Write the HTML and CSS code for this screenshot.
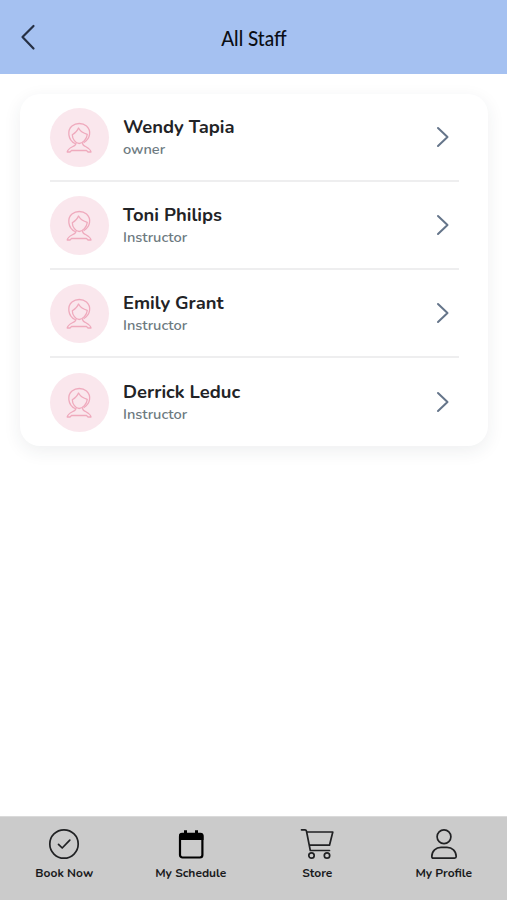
FILE: index.html
```html
<!DOCTYPE html>
<html lang="en">
<head>
    <meta charset="UTF-8">
    <meta name="viewport" content="width=device-width, initial-scale=1.0">
    <title>All Staff</title>
    <link rel="stylesheet" href="styles.css">
</head>
<body>
    <!-- Shared avatar drawing -->
    <svg class="sprite" width="0" height="0">
        <symbol id="avatar" viewBox="0 0 28 31">
            <path d="M9 21.500C1.500 18 1.200 8 6 4C10.200 0.600 16.500 0.700 20.500 4C25.500 8.500 24.500 16.500 18 20.500"/>
            <path d="M12.500 6C11.500 9 9 11 6.300 12.800C6.300 17 9.500 21.500 13.200 21.500C16.500 21.500 21 17 21.300 12.300C18 11.500 14.500 9.500 12.500 6Z"/>
            <path d="M10 21.200C10 25 2.500 24.500 1.200 30H4L5.500 28.500H20.500L22 30H25C23.700 24.500 16.500 25 16.500 21.200"/>
        </symbol>
    </svg>

    <header class="header">
        <button class="back-button" aria-label="Back">
            <svg width="16" height="28" viewBox="0 0 16 28"><path d="M13.500 3L2.500 14L13.500 25.500"/></svg>
        </button>
        <h1>All Staff</h1>
    </header>

    <main class="content">
        <ul class="staff-list">
            <li class="staff-row">
                <div class="avatar"><svg width="28" height="31"><use href="#avatar"/></svg></div>
                <div class="staff-info">
                    <h2>Wendy Tapia</h2>
                    <p>owner</p>
                </div>
                <svg class="chevron" width="14" height="22" viewBox="0 0 14 22"><path d="M2 2L11.500 11L2 20"/></svg>
            </li>
            <li class="staff-row">
                <div class="avatar"><svg width="28" height="31"><use href="#avatar"/></svg></div>
                <div class="staff-info">
                    <h2>Toni Philips</h2>
                    <p>Instructor</p>
                </div>
                <svg class="chevron" width="14" height="22" viewBox="0 0 14 22"><path d="M2 2L11.500 11L2 20"/></svg>
            </li>
            <li class="staff-row">
                <div class="avatar"><svg width="28" height="31"><use href="#avatar"/></svg></div>
                <div class="staff-info">
                    <h2>Emily Grant</h2>
                    <p>Instructor</p>
                </div>
                <svg class="chevron" width="14" height="22" viewBox="0 0 14 22"><path d="M2 2L11.500 11L2 20"/></svg>
            </li>
            <li class="staff-row">
                <div class="avatar"><svg width="28" height="31"><use href="#avatar"/></svg></div>
                <div class="staff-info">
                    <h2>Derrick Leduc</h2>
                    <p>Instructor</p>
                </div>
                <svg class="chevron" width="14" height="22" viewBox="0 0 14 22"><path d="M2 2L11.500 11L2 20"/></svg>
            </li>
        </ul>
    </main>

    <nav class="tab-bar">
        <a class="tab">
            <svg width="34" height="32" viewBox="0 0 34 32">
                <circle cx="17" cy="16" r="14.200"/>
                <path d="M11.500 16.300L15.200 20L22.800 12.200"/>
            </svg>
            <span>Book Now</span>
        </a>
        <a class="tab">
            <svg width="34" height="32" viewBox="0 0 34 32">
                <rect class="calendar" x="6" y="6" width="22.400" height="23.500" rx="2.500"/>
                <path class="solid" d="M5 10.500V7.500Q5 4.800 8 4.800H10V2.300H13V4.800H21V2.300H24V4.800H26.500Q29.500 4.800 29.500 7.500V12H5Z"/>
            </svg>
            <span>My Schedule</span>
        </a>
        <a class="tab">
            <svg width="34" height="32" viewBox="0 0 34 32">
                <path d="M1.500 1.800H5Q6.200 1.800 6.500 3.200L10.300 22.500H29.500M6.800 4H32.800L29.500 17.200H9.300"/>
                <circle cx="11.500" cy="27.500" r="2.700"/>
                <circle cx="27" cy="27.500" r="2.700"/>
            </svg>
            <span>Store</span>
        </a>
        <a class="tab">
            <svg width="34" height="32" viewBox="0 0 34 32">
                <circle cx="17" cy="8.800" r="6.900"/>
                <path d="M4.800 28.600C4.800 22.800 9 19.400 14 19.400H20C25 19.400 29.200 22.800 29.200 28.600Q29.200 30.200 27.600 30.200H6.400Q4.800 30.200 4.800 28.600Z"/>
            </svg>
            <span>My Profile</span>
        </a>
    </nav>
</body>
</html>
```
FILE: styles.css
```css
/* Common styles */
* {
    box-sizing: border-box;
}

body {
    font-family: Nunito, "Open Sans", sans-serif;
    background-color: #ffffff;
    margin: 0;
    display: flex;
    flex-direction: column;
    height: 100vh;
}

h1, h2, p, ul {
    margin: 0;
    padding: 0;
}

svg {
    display: block;
    fill: none;
    stroke-linecap: round;
    stroke-linejoin: round;
}

.sprite {
    position: absolute;
}

/* Header */
.header {
    display: grid;
    grid-template-columns: 60px 1fr 60px;
    align-items: center;
    height: 74px;
    flex-shrink: 0;
    background-color: #a5c1f1;
}

.back-button {
    background: none;
    border: none;
    padding: 0 0 0 20px;
    cursor: pointer;
}

.back-button svg {
    stroke: #263044;
    stroke-width: 2.2;
}

h1 {
    font-family: Lato, sans-serif;
    font-size: 22px;
    font-weight: 500;
    line-height: 28px;
    text-align: center;
    color: #0b0e14;
    padding: 2px 0 0 1px;
    transform: scaleX(0.86);
}

/* Staff card */
.content {
    flex: 1;
    padding: 20px 19px 0 20px;
}

.staff-list {
    list-style: none;
    padding: 0 29px 0 30px;
    border-radius: 20px;
    background-color: #ffffff;
    box-shadow: 0 5px 18px rgba(40, 45, 70, 0.08);
}

.staff-row {
    display: flex;
    align-items: center;
    height: 88px;
    border-bottom: 2px solid #eeeeef;
}

.staff-row:last-child {
    border-bottom: none;
}

.avatar {
    display: flex;
    align-items: center;
    justify-content: center;
    width: 59px;
    height: 59px;
    margin: 1px 14px 0 0;
    border-radius: 50%;
    background-color: #fae7ed;
}

.avatar svg {
    stroke: #efaabd;
    stroke-width: 1.3;
}

.staff-info {
    flex: 1;
}

h2 {
    font-size: 18.4px;
    font-weight: 700;
    line-height: 23px;
    color: #222326;
}

.staff-info p {
    font-size: 14.6px;
    font-weight: 600;
    line-height: 22px;
    color: #6d7a7f;
}

.chevron {
    margin-right: 9px;
    stroke: #65758a;
    stroke-width: 2;
}

/* Bottom tabs */
.tab-bar {
    display: grid;
    grid-template-columns: repeat(4, 1fr);
    height: 84px;
    flex-shrink: 0;
    padding: 11px 0 0 1px;
    border-top: 1px solid #dadada;
    background-color: #cbcbcb;
}

.tab {
    display: flex;
    flex-direction: column;
    align-items: center;
}

.tab svg {
    stroke: #202123;
    stroke-width: 1.7;
}

.tab .calendar {
    stroke: #000000;
    stroke-width: 2.2;
}

.tab .solid {
    fill: #000000;
    stroke: none;
}

.tab span {
    margin-top: 4px;
    font-size: 12px;
    font-weight: 700;
    line-height: 18px;
    color: #191a1c;
}
```
